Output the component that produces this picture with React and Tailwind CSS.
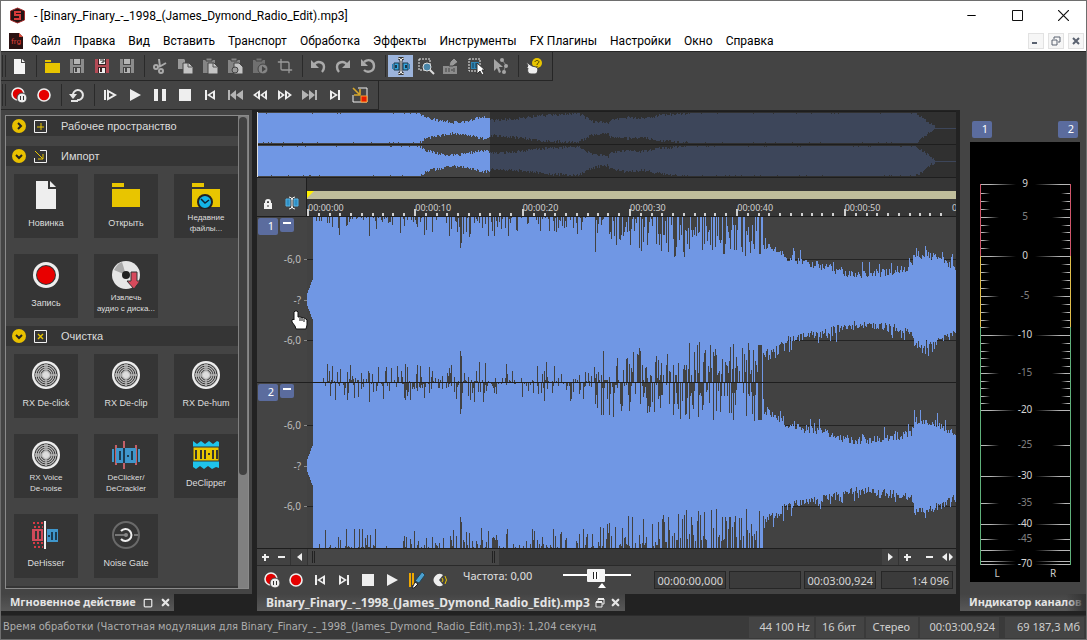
import { useState } from 'react';
import { Minus, Square, X, Crop } from 'lucide-react';

// ---------- waveform data ----------

const makeRandom = (seed) => {
  let s = seed;
  return () => {
    s = (s * 1664525 + 1013904223) % 4294967296;
    return s / 4294967296;
  };
};

const lerp = (points, x) => {
  for (let i = 1; i < points.length; i++) {
    if (x <= points[i][0]) {
      const [x0, y0] = points[i - 1];
      const [x1, y1] = points[i];
      return y0 + ((y1 - y0) * (x - x0)) / (x1 - x0);
    }
  }
  return points[points.length - 1][1];
};

const TAIL = [[455, 54], [468, 50], [480, 40], [500, 36], [520, 32], [535, 27], [550, 24], [575, 26], [590, 28], [605, 32], [608, 45], [620, 44], [635, 40], [641, 34], [650, 31]];

const column = (x, random) => {
  if (x < 6) return 7 + Math.round((x * 16) / 6);
  if (x < 18) return random() < 0.15 ? 79 : 83;
  if (x === 153) return 52;
  if (x === 154) return 57;
  if (x < 288) {
    if (random() < 0.45) return 83;
    return Math.round(83 - 20 * Math.pow(random(), 2.8));
  }
  if (x < 452) {
    if (random() < 0.38) return 83;
    const late = x > 360;
    return Math.round(83 - (late ? 7 : 2) - 33 * Math.pow(random(), late ? 1.4 : 1.9));
  }
  if (x < 457) return random() < 0.4 ? 83 : 46;
  const spike = random() < 0.25 ? 18 : 8;
  return Math.round(lerp(TAIL, x) - 3 + random() * spike);
};

const wavePath = (width, centre, seed, fn) => {
  const top = makeRandom(seed);
  const bottom = makeRandom(seed * 7 + 3);
  let d = '';
  for (let x = 0; x < width; x++) {
    const a = fn(x, top);
    const b = fn(x, bottom);
    d += `M${x} ${centre - a}h1v${a + b}h-1z`;
  }
  return d;
};

const OVERVIEW = [[0, 15], [160, 15], [168, 10], [180, 7], [195, 5], [207, 6], [218, 9], [228, 10], [236, 7], [260, 9], [283, 12], [320, 14], [327, 10], [335, 6], [350, 4], [352, 8], [370, 10], [385, 9], [400, 12], [425, 14], [440, 15], [656, 15], [664, 10], [670, 5], [677, 1], [678, 0]];

const overviewColumn = (x, random) => {
  const base = lerp(OVERVIEW, x);
  if (base <= 1) return 0.5;
  if (base > 14.5) return random() < 0.06 ? 14 : 15;
  return Math.min(15, Math.round(base + random() * 3 - 1));
};

const WAVE_1 = wavePath(650, 83, 11, column);
const WAVE_2 = wavePath(650, 83, 29, column);
const OVER_1 = wavePath(698, 16, 5, overviewColumn);
const OVER_2 = wavePath(698, 49, 17, overviewColumn);

// ---------- icons ----------

const Svg = ({ children, size = 18 }) => (
  <svg width={size} height={size} viewBox={`0 0 ${size} ${size}`} fill="none" className="block shrink-0" aria-hidden="true">
    {children}
  </svg>
);

const floppy = (body, dark) => (
  <>
    <path d="M2 2h14v14H2z" fill={body} />
    <path d="M5 2h8v6H5zM5 10h8v6H5z" fill={dark} />
    <path d="M6 2h6v5H6zM6 11h6v5H6z" fill={body === '#b34a55' ? '#eee' : '#b4b4b4'} />
    <path d="M7 11h2v4H7z" fill={dark} />
  </>
);

const ICONS = {
  newFile: <path d="M4 2h7v4h4v11H4zM12 2l3 3h-3z" fill="#f4f4f4" />,
  open: <><path d="M2 3h6v2H2z" fill="#e8c500" /><path d="M2 6h15v10H2z" fill="#e8c500" /></>,
  save: floppy('#8c8c8c', '#444'),
  saveAs: <>{floppy('#b34a55', '#3a2224')}<path d="M7 3h4v2H9v1M9 7v1" stroke="#222" /></>,
  cut: <g stroke="#aaa" strokeWidth="2"><path d="M8 2l1 8M15 6l-7 4" /><circle cx="5" cy="10" r="2" /><circle cx="10" cy="14" r="2" /></g>,
  copy: <><path d="M2 2h6l1 1v9H2z" fill="#999" /><path d="M7 6h6l4 4v7H7z" fill="#c4c4c4" stroke="#444" /><path d="M12 6v4h4" stroke="#555" /></>,
  paste: <><path d="M2 3h12v13H2z" fill="#858585" /><path d="M5 1h6v3H5z" fill="#858585" stroke="#444" /><path d="M7 6h6l4 4v7H7z" fill="#c4c4c4" stroke="#444" /><path d="M12 6v4h4" stroke="#555" /></>,
  pasteMix: <><path d="M2 3h12v13H2z" fill="#858585" /><path d="M5 1h6v3H5z" fill="#858585" stroke="#444" /><path d="M8 6h5l4 4v7H8z" fill="#c4c4c4" stroke="#444" /><circle cx="9" cy="13" r="3" fill="#999" stroke="#444" /></>,
  pastePlay: <><path d="M2 3h12v13H2z" fill="#707070" /><path d="M5 1h6v3H5z" fill="#707070" stroke="#444" /><circle cx="12" cy="12" r="5" fill="#858585" stroke="#444" /><path d="M11 9l4 3-4 3z" fill="#444" /></>,
  undo: <><path d="M5 8c3-5 10-3 10 2 0 2-1 4-2 5" stroke="#aaa" strokeWidth="2.4" /><path d="M2 3v8h8z" fill="#aaa" /></>,
  redo: <><path d="M13 8c-3-5-10-3-10 2 0 2 1 4 2 5" stroke="#aaa" strokeWidth="2.4" /><path d="M16 3v8H8z" fill="#aaa" /></>,
  repeat: <><path d="M5 5c5-4 10-1 10 4 0 6-7 7-10 4" stroke="#aaa" strokeWidth="2.4" /><path d="M2 2v7h7z" fill="#aaa" /></>,
  edit: <><path d="M2 6h5v7H2zM11 6h5v7h-5z" fill="#36a4dc" stroke="#16384d" /><path d="M4 8v3M14 8v3" stroke="#16384d" strokeWidth="2" /><path d="M0 7v5M18 7v5" stroke="#2382b8" strokeWidth="2" /><path d="M6 1q3 0 3 3v10q0 3-3 3M12 1q-3 0-3 3M9 14q0 3 3 3" stroke="#333" strokeWidth="3" /><path d="M6 1q3 0 3 3v10q0 3-3 3M12 1q-3 0-3 3M9 14q0 3 3 3" stroke="#eee" /></>,
  magnify: <><path d="M2 2h11v11H2z" stroke="#eee" strokeDasharray="2 1" /><circle cx="10" cy="10" r="4" fill="#4a86a8" stroke="#ddd" /><path d="M13 13l4 4" stroke="#ddd" strokeWidth="2" /></>,
  pencil: <><path d="M1 9h14v8H1z" fill="#8c8c8c" /><path d="M4 11v4M7 11v4M9 13h2M12 11v4" stroke="#444" /><path d="M7 9l1-4 4-4 4 4-5 4z" fill="#999" stroke="#444" /></>,
  event: <><path d="M2 2h11v12H2z" stroke="#eee" strokeDasharray="2 1" /><path d="M4 5h8v7H4z" fill="#2f86b5" /><path d="M6 6v5M9 6v5" stroke="#173c52" /><path d="M10 6v11l3-3 2 4 2-1-2-4h3z" fill="#fff" stroke="#333" /></>,
  envelope: <><path d="M2 2v12l3-3 2 5 2-1-2-5h4z" fill="#a5a5a5" /><path d="M10 3l4 5-3 8" stroke="#888" /><circle cx="10" cy="3" r="2" fill="#a5a5a5" /><circle cx="14" cy="9" r="2" fill="#a5a5a5" /><circle cx="12" cy="15" r="2" fill="#a5a5a5" /></>,
  help: <><circle cx="12" cy="6" r="5" fill="#e8c500" /><path d="M10 5c0-2 4-2 4 0 0 1-2 1-2 3M12 9v1" stroke="#4d4200" /><path d="M1 5l6 4 4 1c3 1 2 7-1 7H6c-3 0-4-3-3-6H1l2-2z" fill="#f0f0f0" stroke="#444" /></>,
  recordPause: <><circle cx="8" cy="8" r="6" fill="#e00000" stroke="#eee" strokeWidth="1.6" /><circle cx="12" cy="12" r="5" fill="#eee" stroke="#444" /><path d="M10 10h1v4h-1zM13 10h1v4h-1z" fill="#333" /></>,
  record: <><circle cx="9" cy="9" r="6" fill="#e60000" stroke="#eee" strokeWidth="1.6" /></>,
  loop: <><path d="M5 10a5 5 0 1 1 4 4" stroke="#e6e6e6" strokeWidth="2" /><path d="M1 8h8l-4 5z" fill="#e6e6e6" /><path d="M3 15h7" stroke="#e6e6e6" strokeWidth="2" /></>,
  playAll: <><path d="M3 4h2v10H3z" fill="#eee" /><path d="M7 5l7 4-7 4z" stroke="#eee" strokeWidth="2" /></>,
  play: <path d="M4 3l11 6-11 6z" fill="#eee" />,
  pause: <path d="M3 3h4v12H3zM11 3h4v12h-4z" fill="#eee" />,
  stop: <path d="M3 3h12v12H3z" fill="#eee" />,
  toStart: <path d="M4 4h2v10H4zM14 4v10L6 9zM12 7v4l-3-2z" fill="#eee" fillRule="evenodd" />,
  toEnd: <path d="M14 4h-2v10h2zM4 4v10l8-5zM6 7v4l3-2z" fill="#eee" fillRule="evenodd" />,
  prev: <path d="M2 4h2v10H2zM10 4v10L4 9zM17 4v10l-7-5z" fill="#b4b4b4" />,
  next: <path d="M16 4h-2v10h2zM8 4v10l6-5zM1 4v10l7-5z" fill="#b4b4b4" />,
  rewind: <path d="M9 4v10L2 9zM16 4v10L9 9zM7 7v4L5 9zM14 7v4l-2-2z" fill="#eee" fillRule="evenodd" />,
  forward: <path d="M9 4v10l7-5zM2 4v10l7-5zM11 7v4l2-2zM4 7v4l2-2z" fill="#eee" fillRule="evenodd" />,
  marker: <><path d="M7 2h9v14H2V9" stroke="#eee" /><path d="M2 2l6 6M9 3v6H3" stroke="#d9a82a" strokeWidth="1.6" /><path d="M10 10h6v6h-6z" fill="#e51c00" stroke="#ff9c2a" /></>,
  brush: <><path d="M3 2v14M6 2v12" stroke="#f0a800" strokeWidth="2" /><path d="M15 1l3 3-6 8-4-2z" fill="#4aa0d0" stroke="#245" /><path d="M8 11l3 2-4 4H5z" fill="#f2f2f2" stroke="#222" /></>,
  scrub: <><path d="M12 4a6 6 0 1 0 0 10L8 9z" fill="#eee" /><path d="M11 7q2 2 0 4M14 5q3 4 0 8" stroke="#e8c500" /></>,
};

const disc = (
  <>
    <circle cx="14" cy="14" r="14" fill="#eee" />
    <circle cx="14" cy="14" r="12" fill="#bbb" />
    <g stroke="#333">
      <circle cx="14" cy="14" r="11" />
      <circle cx="14" cy="14" r="9" />
      <circle cx="14" cy="14" r="7" />
      <circle cx="14" cy="14" r="5" />
    </g>
    <path d="M12 3h4l-1 22h-2zM3 12v4l22-1v-2z" fill="#ccc" opacity="0.6" />
    <circle cx="14" cy="14" r="3" fill="#ddd" />
  </>
);

const TILE_ICONS = {
  file: <><path d="M4 0h12v8h8v20H4z" fill="#eee" /><path d="M18 0l6 6h-6z" fill="#eee" /></>,
  folder: <path d="M0 2h12v4H0zM0 8h28v18H0z" fill="#e8c500" />,
  recent: <><path d="M0 2h12v4H0zM0 8h28v18H0z" fill="#e8c500" /><circle cx="13" cy="21" r="7" fill="#14b4e6" stroke="#222" strokeWidth="2" /><path d="M9 18l4 4 4-3" stroke="#123" strokeWidth="1.5" /></>,
  rec: <><circle cx="14" cy="14" r="13" fill="#eee" /><circle cx="14" cy="14" r="10" fill="#333" /><circle cx="14" cy="14" r="9" fill="#e80000" /></>,
  cd: <><circle cx="14" cy="14" r="14" fill="#e6e6e6" /><path d="M14 14L2 9q3-6 8-8z" fill="#aaa" /><circle cx="14" cy="14" r="4" fill="#222" /><path d="M19 11h6v9h3l-6 8-7-8h4z" fill="#d64a5c" stroke="#333" /></>,
  disc,
  declick: (
    <>
      <path d="M4 4v20M12 0v28M24 4v20" stroke="#c46068" strokeWidth="2" />
      <path d="M4 7h20v15H4z" fill="#3f97cc" />
      <path d="M1 8v13M27 8v13" stroke="#3f97cc" strokeWidth="2" />
      <path d="M8 10v9M12 7v15M20 10v9M15 15h2" stroke="#1d3c50" strokeWidth="2" />
    </>
  ),
  declip: (
    <>
      <path d="M1 0l4 3 4-3 4 3 4-3 4 3 4-3 2 1v26l-3-1-4 2-4-3-4 3-4-3-4 3-3-2z" fill="#1fc3ea" />
      <path d="M1 6h26v14H1z" fill="#e8c500" stroke="#333" />
      <path d="M4 9v9M9 9v9M13 9v9M21 9v9M25 9v9" stroke="#333" strokeWidth="2" />
      <path d="M16 13h2" stroke="#333" strokeWidth="2" />
    </>
  ),
  dehiss: (
    <>
      <path d="M1 2h10M2 6h9M1 22h10M2 26h9" stroke="#d63a45" strokeWidth="2" strokeDasharray="2 2" />
      <path d="M0 8h11v12H0z" fill="#d04a5a" />
      <path d="M4 10v8M8 10v8" stroke="#333" strokeWidth="2" />
      <path d="M13 0v28" stroke="#f2f2f2" strokeWidth="2" />
      <path d="M15 8h11v13H15z" fill="#3f97cc" />
      <path d="M16 15h2M20 11v8M24 11v8" stroke="#1d3c50" strokeWidth="2" />
    </>
  ),
  gate: (
    <>
      <circle cx="14" cy="14" r="13" stroke="#6a6a6a" strokeWidth="2" />
      <path d="M3 14h11M22 14h4" stroke="#777" strokeWidth="2" />
      <path d="M9 10a6 6 0 1 1 0 8" stroke="#eee" strokeWidth="2" />
      <circle cx="14" cy="14" r="2" fill="#888" />
    </>
  ),
};

// ---------- shared pieces ----------

const ToolButton = ({ icon, label, active, children }) => (
  <button type="button" aria-label={label} className={`flex h-[22px] w-[25px] items-center justify-center ${active ? 'bg-[#9cb4dc]' : ''}`}>
    {children || <Svg>{ICONS[icon]}</Svg>}
  </button>
);

const Separator = () => <div className="ml-[5px] mr-[2px] h-[22px] w-px bg-[#2a2a2a]" />;

const Grip = () => <div className="ml-px h-[22px] w-1 border-x border-[#2a2a2a]" />;

const Toolbar = ({ groups }) => (
  <div className="flex w-fit items-center border-b border-r border-[#262626] pr-[6px] h-[29px]">
    <Grip />
    {groups.map((group, i) => (
      <div key={i} className="flex items-center">
        {i > 0 && <Separator />}
        {group.map(([icon, label]) => (
          <ToolButton key={label} icon={icon} label={label} active={icon === 'edit'}>
            {icon === 'crop' && <Crop size={16} className="text-[#999]" />}
          </ToolButton>
        ))}
      </div>
    ))}
  </div>
);

const MENU = ['Файл', 'Правка', 'Вид', 'Вставить', 'Транспорт', 'Обработка', 'Эффекты', 'Инструменты', 'FX Плагины', 'Настройки', 'Окно', 'Справка'];

const FILE_TOOLS = [
  [['newFile', 'New']],
  [['open', 'Open'], ['save', 'Save'], ['saveAs', 'Save as'], ['save', 'Save all']],
  [['cut', 'Cut'], ['copy', 'Copy'], ['paste', 'Paste'], ['pasteMix', 'Mix'], ['pastePlay', 'Play clipboard'], ['crop', 'Trim']],
  [['undo', 'Undo'], ['redo', 'Redo'], ['repeat', 'Repeat']],
  [['edit', 'Edit tool'], ['magnify', 'Magnify tool'], ['pencil', 'Pencil tool'], ['event', 'Event tool'], ['envelope', 'Envelope tool']],
  [['help', 'Help']],
];

const TRANSPORT_TOOLS = [
  [['recordPause', 'Arm record'], ['record', 'Record']],
  [['loop', 'Loop playback']],
  [['playAll', 'Play all'], ['play', 'Play'], ['pause', 'Pause'], ['stop', 'Stop'], ['toStart', 'Go to start'], ['prev', 'Previous marker'], ['rewind', 'Rewind'], ['forward', 'Forward'], ['next', 'Next marker'], ['toEnd', 'Go to end'], ['marker', 'Insert marker']],
];

const SECTIONS = [
  { title: 'Рабочее пространство', icon: 'workspace', open: false, tiles: [] },
  {
    title: 'Импорт',
    icon: 'import',
    open: true,
    tiles: [
      ['file', 'Новинка'],
      ['folder', 'Открыть'],
      ['recent', 'Недавние\nфайлы...', true],
      ['rec', 'Запись'],
      ['cd', 'Извлечь\nаудио с диска...', true],
    ],
  },
  {
    title: 'Очистка',
    icon: 'clean',
    open: true,
    tiles: [
      ['disc', 'RX De-click'],
      ['disc', 'RX De-clip'],
      ['disc', 'RX De-hum'],
      ['disc', 'RX Voice\nDe-noise', true],
      ['declick', 'DeClicker/\nDeCrackler', true],
      ['declip', 'DeClipper'],
      ['dehiss', 'DeHisser'],
      ['gate', 'Noise Gate'],
    ],
  },
];

const SECTION_ICONS = {
  workspace: <><path d="M.5.5h12v12H.5z" stroke="#f2f2f2" /><path d="M3 7h7M7 3v7" stroke="#e8c500" /></>,
  import: <><path d="M6 .5h6.500v12H.5V8" stroke="#f2f2f2" /><path d="M1 1l8 8M9 4v5H4" stroke="#e8c500" /></>,
  clean: <><path d="M.5.5h12v12H.5z" stroke="#f2f2f2" /><path d="M4 4l5 5M9 4l-5 5" stroke="#e8c500" strokeWidth="1.4" /></>,
};

const Section = ({ section }) => (
  <section>
    <h2>
      <button type="button" aria-expanded={section.open} className="flex h-5 w-full items-center bg-[#353535] pl-[6px] text-[11px] text-[#dcdcdc]">
        <Svg size={14}>
          <circle cx="7" cy="7" r="7" fill="#e8c000" />
          <path d={section.open ? 'M4 6l3 3 3-3' : 'M6 4l3 3-3 3'} stroke="#222" strokeWidth="2" />
        </Svg>
        <span className="ml-2 mr-[14px]"><Svg size={13}>{SECTION_ICONS[section.icon]}</Svg></span>
        {section.title}
      </button>
    </h2>
    {section.tiles.length > 0 ? (
      <div className="grid grid-cols-[repeat(3,64px)] gap-4 p-2 pr-0">
        {section.tiles.map(([icon, label, small]) => (
          <button key={label} type="button" className="flex h-16 flex-col items-center bg-[#353535] pt-[7px] text-[#dedede]">
            <Svg size={28}>{TILE_ICONS[icon]}</Svg>
            <span className={`mt-[3px] flex h-[22px] items-center whitespace-pre text-center leading-[11px] ${small ? 'text-[8px]' : 'text-[9px]'}`}>{label}</span>
          </button>
        ))}
      </div>
    ) : (
      <div className="h-[10px]" />
    )}
  </section>
);

const ActionPanel = () => (
  <aside className="flex w-[251px] shrink-0 flex-col">
    <div className="flex min-h-0 flex-1 bg-[#444] pb-[5px] pl-1 pr-[3px] pt-[5px]">
      <div className="flex min-h-0 flex-1 overflow-hidden border border-[#8a8a8a] font-['Liberation_Sans',sans-serif]">
        <div className="flex-1 overflow-hidden">
          {SECTIONS.map(section => <Section key={section.title} section={section} />)}
          <div className="h-5 bg-[#353535]" />
        </div>
        <div className="w-[10px] bg-[#808080] px-px pt-px">
          <div className="h-[76%] rounded-full bg-[#414141]" />
        </div>
      </div>
    </div>
    <div className="mb-1 flex h-[17px] w-[173px] items-center gap-[7px] bg-linear-to-b from-[#444] to-[#585858] pl-[9px] text-[11px] font-bold text-[#e4e4e4]">
      <span className="whitespace-nowrap">Мгновенное действие</span>
      <button type="button" aria-label="Float panel"><Square size={10} strokeWidth={3} /></button>
      <button type="button" aria-label="Close panel"><X size={11} strokeWidth={5} /></button>
    </div>
  </aside>
);

const Badge = ({ children }) => (
  <span className="flex h-[17px] w-5 items-center justify-end rounded-[2px] bg-[#5b6c9e] pr-1 text-[11px] text-white">{children}</span>
);

const Overview = () => (
  <div className="h-[67px] border-b border-t border-[#1e1e1e] bg-[#303030]">
    <svg className="block h-full w-full" viewBox="0 0 699 65" preserveAspectRatio="none" shapeRendering="crispEdges" role="img" aria-label="Overview">
      <rect width="233" height="65" fill="#444" />
      <rect x="233" width="466" height="65" fill="#303030" />
      <clipPath id="played"><rect width="233" height="65" /></clipPath>
      <g transform="translate(1 0)">
        <path d={OVER_1} fill="#3d465a" />
        <path d={OVER_2} fill="#3d465a" />
      </g>
      <g clipPath="url(#played)">
        <g transform="translate(1 0)">
          <path d={OVER_1} fill="#7097e4" />
          <path d={OVER_2} fill="#7097e4" />
        </g>
      </g>
      <path d="M0 32h699v1H0z" fill="#1e1e1e" />
      <path d="M0 0h1v65H0z" fill="#ddd" />
    </svg>
  </div>
);

const TIMES = ['00:00:00', '00:00:10', '00:00:20', '00:00:30', '00:00:40', '00:00:50', '00:01:00'];

const Ruler = () => (
  <div className="flex h-[39px] border-b border-[#1e1e1e]">
    <div className="flex w-[49px] shrink-0 items-end gap-3 bg-[#444] pb-[5px] pl-[7px]">
      <button type="button" aria-label="Lock">
        <svg width="9" height="14" viewBox="0 0 9 14" fill="none">
          <path d="M2 7V5q0-2 2-2t2 2v2" stroke="#f2f2f2" strokeWidth="2" />
          <path d="M0 6h8v6H0z" fill="#f2f2f2" />
          <path d="M4 8v2" stroke="#333" />
        </svg>
      </button>
      <button type="button" aria-label="Edit tool">
        <svg width="14" height="16" viewBox="0 0 14 16" fill="none">
          <path d="M1 4h4v7H1zM9 4h4v7H9z" fill="#2f8fc4" stroke="#56b4e6" />
          <path d="M4 2q3 0 3 3v6q0 3-3 3M10 2q-3 0-3 3M7 11q0 3 3 3" stroke="#f2f2f2" />
        </svg>
      </button>
    </div>
    <div className="min-w-0 flex-1 border-l border-[#1e1e1e] bg-[#363636] pt-[13px]">
      <div className="h-2 bg-[#bfbd9b]">
        <svg width="7" height="7" viewBox="0 0 7 7" className="block"><path d="M0 0h7L0 7z" fill="#fff000" /></svg>
      </div>
      <div className="grid h-[17px] grid-cols-[repeat(6,1fr)_5px] overflow-hidden">
        {TIMES.map((time, i) => (
          <div key={time} className="relative overflow-hidden pl-px pt-[3px] text-[9px] leading-[11px] text-[#d0d0d0]">
            {time}
            <svg className="absolute inset-x-0 bottom-0 h-[7px] w-full" viewBox="0 0 108 7" preserveAspectRatio="none" shapeRendering="crispEdges">
              {i < 6 && <path d="M0 0h2v7H0z" fill="#d0d0d0" />}
              {i < 6 && [11, 22, 32, 43, 54, 65, 75, 86, 97].map(x => <path key={x} d={`M${x} 4h2v3h-2z`} fill="#d0d0d0" />)}
            </svg>
          </div>
        ))}
      </div>
    </div>
  </div>
);

const HandCursor = () => (
  <svg className="absolute left-[34px] top-[93px]" width="17" height="20" viewBox="0 0 17 20" aria-hidden="true">
    <path d="M4 1h2l1 1v5h2l4 1 2 1 1 1v5l-1 4H5l-1-3-3-4v-2l1-1 1 1V2z" fill="#fff" stroke="#111" />
    <path d="M9 8v3M11 8v3M13 9v3" stroke="#111" />
  </svg>
);

const Channel = ({ number, path, cursor }) => (
  <div className="flex min-h-0 flex-1 border-b border-[#1e1e1e]">
    <div className="relative flex w-[50px] shrink-0 flex-col bg-[#444] pb-[21px]">
      <div className="flex h-[22px] shrink-0 gap-[2px] pl-px pt-px">
        <Badge>{number}</Badge>
        <button type="button" aria-label={`Minimize channel ${number}`} className="flex h-[14px] w-[14px] justify-center rounded-[2px] bg-[#5b6c9e] pt-1">
          <span className="h-[2px] w-2 bg-white" />
        </button>
      </div>
      {['-6,0', '-?', '-6,0'].map((label, i) => (
        <div key={i} className="flex flex-1 items-center justify-end gap-[3px] text-[10px] text-[#bdbdbd]">
          {label}
          <span className="h-px w-[3px] bg-[#8a8a8a]" />
        </div>
      ))}
      {cursor && <HandCursor />}
    </div>
    <div className="min-h-0 min-w-0 flex-1 bg-[#424242]">
      <svg className="block h-full w-full" viewBox="0 0 650 166" preserveAspectRatio="none" shapeRendering="crispEdges" role="img" aria-label={`Channel ${number} waveform`}>
        <path d="M0 42h650v1H0zM0 124h650v1H0z" fill="#242424" />
        <path d={path} fill="#7097e4" />
      </svg>
    </div>
  </div>
);

const ScrollRow = () => (
  <div className="flex h-4 items-center bg-[#383838] text-[#eee]">
    <div className="flex h-full items-center bg-[#424242]">
      <button type="button" aria-label="Zoom in level" className="flex w-4 justify-center"><svg width="7" height="7"><path d="M0 3h7M3 0v7" stroke="#eee" strokeWidth="2" /></svg></button>
      <button type="button" aria-label="Zoom out level" className="flex w-[17px] justify-center"><svg width="7" height="7"><path d="M0 3h7" stroke="#eee" strokeWidth="2" /></svg></button>
      <button type="button" aria-label="Scroll left" className="flex h-full w-[18px] items-center justify-center border-x border-[#333]"><svg width="5" height="8"><path d="M5 0v8L0 4z" fill="#eee" /></svg></button>
    </div>
    <div className="flex h-full flex-1">
      <div className="flex h-full w-1/3 items-center justify-between bg-[#464646] px-1">
        <span className="h-3 w-[3px] border-x border-[#222]" />
        <span className="h-3 w-[3px] border-x border-[#222]" />
      </div>
    </div>
    <div className="flex h-full items-center bg-[#424242]">
      <button type="button" aria-label="Scroll right" className="flex h-full w-[17px] items-center justify-center border-r border-[#333]"><svg width="5" height="8"><path d="M0 0v8l5-4z" fill="#eee" /></svg></button>
      <button type="button" aria-label="Zoom in" className="flex w-[17px] justify-center"><svg width="7" height="7"><path d="M0 3h7M3 0v7" stroke="#eee" strokeWidth="2" /></svg></button>
      <button type="button" aria-label="Zoom out" className="ml-1 flex w-[18px] justify-center"><svg width="7" height="7"><path d="M0 3h7" stroke="#eee" strokeWidth="2" /></svg></button>
      <button type="button" aria-label="Fit" className="flex w-[18px] justify-center"><svg width="11" height="8"><path d="M5 0v8L0 4zM7 0v8l4-4z" fill="#eee" /></svg></button>
    </div>
  </div>
);

const PLAYER_TOOLS = [['recordPause', 'Arm'], ['record', 'Record'], ['toStart', 'Start'], ['toEnd', 'End'], ['stop', 'Stop'], ['play', 'Play'], ['brush', 'Paint'], ['scrub', 'Scrub']];

const TimeBox = ({ label, value, wide }) => (
  <input
    aria-label={label}
    defaultValue={value}
    className={`h-[18px] w-[72px] border border-[#262626] bg-[#3b3b3b] text-right text-[11px] text-[#d6d6d6] ${wide ? 'ml-[2px] pr-[3px]' : 'pr-[2px]'}`}
  />
);

const Player = () => {
  const [rate, setRate] = useState(48);

  return (
    <div className="flex h-[29px] items-center justify-between border-t border-[#2a2a2a] bg-[#444] pl-[3px] pr-[3px]">
      <div className="flex items-center">
        {PLAYER_TOOLS.map(([icon, label]) => (
          <button key={label} type="button" aria-label={label} className="flex h-6 w-6 items-center justify-center"><Svg>{ICONS[icon]}</Svg></button>
        ))}
        <label htmlFor="rate" className="ml-[11px] w-[100px] pb-2 text-[11px] text-[#e0e0e0]">Частота: 0,00</label>
        <div className="relative h-[22px] w-[68px]">
          <input
            id="rate"
            type="range"
            value={rate}
            onChange={e => setRate(Number(e.target.value))}
            className="block h-[12px] w-full appearance-none bg-[linear-gradient(#fff,#fff)] bg-[length:100%_2px] bg-center bg-no-repeat [&::-webkit-slider-thumb]:h-[13px] [&::-webkit-slider-thumb]:w-[18px] [&::-webkit-slider-thumb]:appearance-none [&::-webkit-slider-thumb]:rounded-[1px] [&::-webkit-slider-thumb]:border-[6px] [&::-webkit-slider-thumb]:border-y-[3px] [&::-webkit-slider-thumb]:border-[#f4f4f4] [&::-webkit-slider-thumb]:bg-[repeating-linear-gradient(90deg,#222_0_1px,#fff_1px_3px)]"
          />
          <svg width="8" height="5" className="absolute left-[35px] top-[14px]"><path d="M4 0l4 5H0z" fill="#fff" /></svg>
        </div>
      </div>
      <div className="flex gap-[3px]">
        <TimeBox label="Selection start" value="00:00:00,000" />
        <TimeBox label="Selection end" value="" />
        <TimeBox label="Selection length" value="00:03:00,924" />
        <TimeBox label="Zoom ratio" value="1:4 096" wide />
      </div>
    </div>
  );
};

const Editor = () => (
  <main className="ml-[5px] mr-1 flex min-w-0 flex-1 flex-col pt-px">
    <Overview />
    <Ruler />
    <Channel number={1} path={WAVE_1} cursor />
    <Channel number={2} path={WAVE_2} />
    <ScrollRow />
    <Player />
    <div className="mb-1 flex h-[17px] w-fit items-center gap-[5px] bg-linear-to-b from-[#444] to-[#585858] pl-[9px] pr-1 text-[12px] font-bold text-[#e4e4e4]">
      Binary_Finary_-_1998_(James_Dymond_Radio_Edit).mp3
      <button type="button" aria-label="Restore file">
        <svg width="10" height="10" viewBox="0 0 10 10" fill="none"><path d="M3 3V1h6v5H7M1 4h6v5H1z" stroke="#eee" /><path d="M1 4h6M3 1h6" stroke="#eee" strokeWidth="2" /></svg>
      </button>
      <button type="button" aria-label="Close file"><X size={11} strokeWidth={5} /></button>
    </div>
  </main>
);

// [label, line row, is main step]
const SCALE = [['9', 42, true], ['5', 75, false], ['0', 114, true], ['-5', 154, false], ['-10', 193, true], ['-15', 231, false], ['-20', 268, true], ['-25', 303, false], ['-30', 334, true], ['-35', 361, false], ['-40', 382, true], ['-45', 397, false], ['', 408, true], ['', 419, true], ['-70', 422, true]];
const MINOR = [51, 59, 67, 83, 90, 98, 106, 122, 130, 138, 146, 162, 170, 178, 185, 201, 209, 216, 224, 239, 246, 254, 261];

const Meters = () => (
  <aside className="flex w-[126px] shrink-0 flex-col">
    <div className="flex min-h-0 flex-1 flex-col bg-[#444] pl-[10px] pr-[6px] pt-[11px]">
      <div className="mb-1 flex justify-between px-[2px]">
        <Badge>1</Badge>
        <Badge>2</Badge>
      </div>
      <svg width="110" height="440" viewBox="0 0 110 440" className="block bg-black" role="img" aria-label="Channel meters">
        <defs>
          <linearGradient id="fadeL"><stop offset="0.3" stopColor="#b8b8b8" /><stop offset="1" stopColor="#000" /></linearGradient>
          <linearGradient id="fadeR"><stop offset="0" stopColor="#000" /><stop offset="0.7" stopColor="#b8b8b8" /></linearGradient>
        </defs>
        {MINOR.map(y => (
          <g key={y} shapeRendering="crispEdges">
            <rect x="10" y={y} width="10" height="1" fill="url(#fadeL)" />
            <rect x="91" y={y} width="10" height="1" fill="url(#fadeR)" />
          </g>
        ))}
        {SCALE.map(([label, y, main]) => (
          <g key={y}>
            <rect x="10" y={y} width={main ? 36 : 19} height="1" fill="url(#fadeL)" shapeRendering="crispEdges" />
            <rect x={main ? 65 : 82} y={y} width={main ? 36 : 19} height="1" fill="url(#fadeR)" shapeRendering="crispEdges" />
            <text x="55" y={y + 3} textAnchor="middle" fontSize="10" fill={main ? '#d4d4d4' : '#808080'}>{label}</text>
          </g>
        ))}
        <g shapeRendering="crispEdges">
          <path d="M10 42h1v72h-1zM100 42h1v72h-1z" fill="#d0566a" />
          <path d="M10 114h1v71h-1zM100 114h1v71h-1z" fill="#e0bd4a" />
          <path d="M10 185h1v238h-1zM100 185h1v238h-1z" fill="#5fb07a" />
        </g>
        <text x="27" y="435" textAnchor="middle" fontSize="10" fill="#ccc">L</text>
        <text x="83" y="435" textAnchor="middle" fontSize="10" fill="#ccc">R</text>
      </svg>
    </div>
    <div className="relative mb-1 flex h-[17px] items-center overflow-hidden whitespace-nowrap bg-linear-to-b from-[#444] to-[#585858] pl-[9px] text-[11px] font-bold text-[#e4e4e4]">
      Индикатор каналов
      <span className="absolute inset-y-0 right-0 w-5 bg-linear-to-r from-transparent to-[#333]" />
    </div>
  </aside>
);

const STATUS = [
  ['44 100 Hz', 'w-[65px]'],
  ['16 бит', 'w-12 pr-2'],
  ['Стерео', 'w-[52px] pr-2'],
  ['00:03:00,924', 'w-[79px] pr-1'],
  ['69 187,3 Мб', 'ml-1 w-[79px] pr-1'],
];

const App = () => (
  <div className="flex h-screen flex-col overflow-hidden border border-[#6e6e6e] bg-[#444] font-['Noto_Sans',sans-serif]">
    <header className="flex h-[29px] shrink-0 items-center bg-white pl-2 text-black">
      <Svg size={17}>
        <path d="M8.500 1l7 3v9l-7 3-7-3V4z" fill="#241414" stroke="#a12a2a" />
        <path d="M12 5H6v3h5v4H5" stroke="#d83a3a" strokeWidth="2" />
      </Svg>
      <h1 className="ml-2 flex-1 font-['Roboto',sans-serif] text-[12px]">- [Binary_Finary_-_1998_(James_Dymond_Radio_Edit).mp3]</h1>
      <button type="button" aria-label="Minimize" className="flex w-[46px] justify-center"><Minus size={13} strokeWidth={2} /></button>
      <button type="button" aria-label="Maximize" className="flex w-[46px] justify-center">
        <svg width="11" height="11" fill="none"><path d="M.5.5h10v10H.5z" stroke="#111" /></svg>
      </button>
      <button type="button" aria-label="Close" className="flex w-[46px] justify-center">
        <svg width="11" height="11" fill="none"><path d="M0 0l11 11M11 0L0 11" stroke="#111" strokeWidth="1.2" /></svg>
      </button>
    </header>
    <nav className="flex h-[21px] shrink-0 items-center bg-white pl-2 pr-[2px] font-['Roboto',sans-serif] text-[12px] text-black">
      <svg width="14" height="16" viewBox="0 0 14 16" aria-hidden="true" className="mr-2">
        <path d="M0 0h10l4 4v12H0z" fill="#2a1212" />
        <path d="M10 0l4 4h-4z" fill="#e04a3a" />
        <text x="7" y="11" textAnchor="middle" fontSize="8" fill="#e0403a">frg</text>
      </svg>
      <div className="flex flex-1 gap-[13px]">
        {MENU.map(item => <button key={item} type="button">{item}</button>)}
      </div>
      <div className="flex gap-1">
        {['M3 9h5', 'M5 5V3h6v5H9M3 6h5v5H3z', 'M4 4l6 6M10 4l-6 6'].map((d, i) => (
          <button key={d} type="button" aria-label={['Minimize file', 'Restore file window', 'Close file window'][i]} className="flex h-4 w-4 items-center justify-center border border-[#e2e2e2] bg-[#f6f6f6]">
            <svg width="14" height="14" fill="none"><path d={d} stroke="#5a6270" strokeWidth={i === 1 ? 1 : 2} /></svg>
          </button>
        ))}
      </div>
    </nav>
    <div className="shrink-0 border-t border-[#262626]">
      <Toolbar groups={FILE_TOOLS} />
      <Toolbar groups={TRANSPORT_TOOLS} />
    </div>
    <div className="flex min-h-0 flex-1 bg-[#222]">
      <ActionPanel />
      <Editor />
      <Meters />
    </div>
    <footer className="flex h-6 shrink-0 items-center gap-[2px] border-t border-[#2c2c2c] bg-[#3a3a3a] pl-[2px] pr-[2px] text-[11px] text-[#adadad]">
      <p className="flex-1 truncate font-['DejaVu_Sans_Condensed','Noto_Sans',sans-serif]">Время обработки (Частотная модуляция для Binary_Finary_-_1998_(James_Dymond_Radio_Edit).mp3): 1,204 секунд</p>
      {STATUS.map(([text, width]) => (
        <span key={text} className={`flex h-[21px] items-center justify-end whitespace-nowrap bg-[#444] pr-1 text-[#cfcfcf] ${width}`}>{text}</span>
      ))}
    </footer>
  </div>
);

export default App;
